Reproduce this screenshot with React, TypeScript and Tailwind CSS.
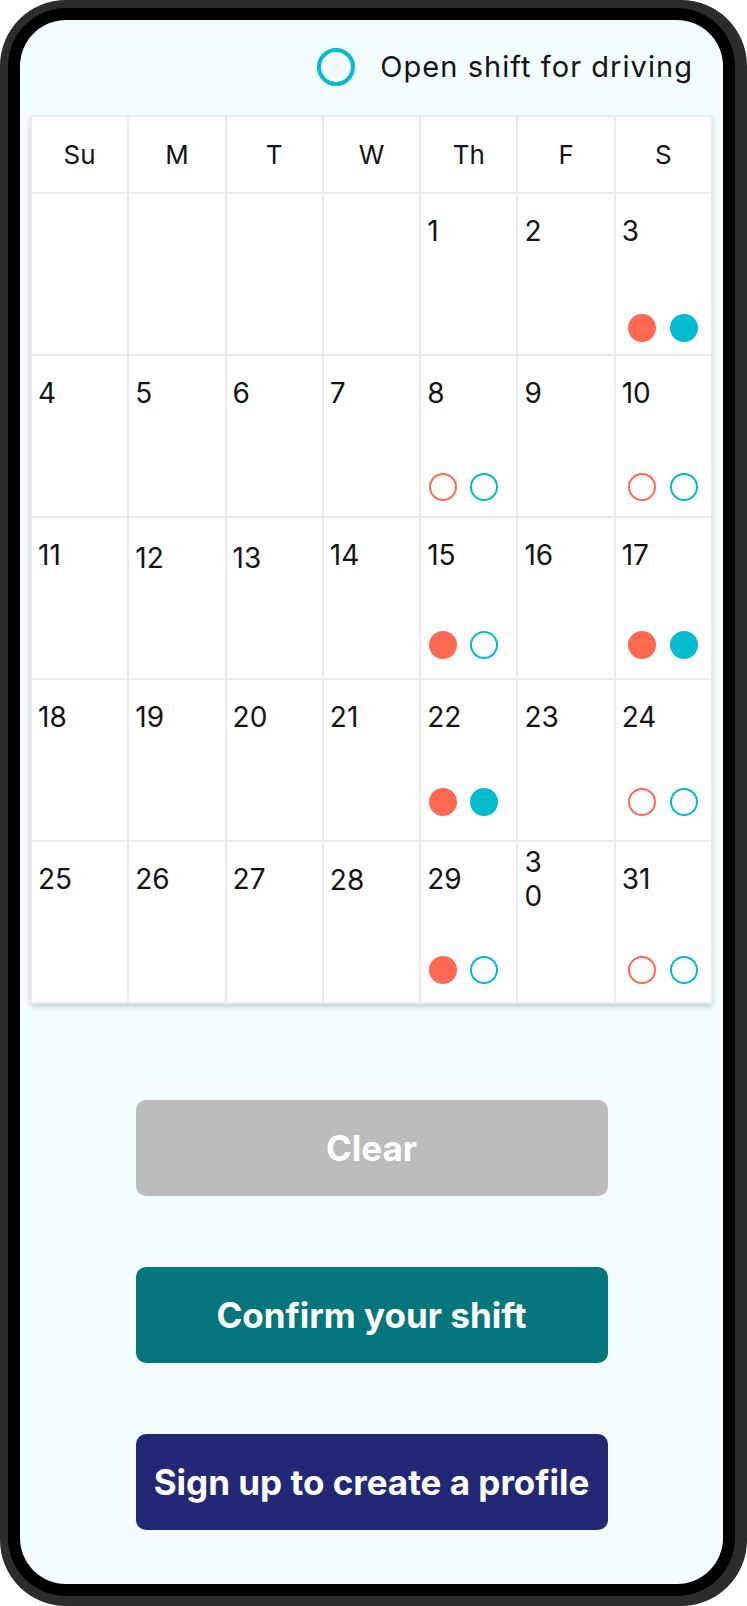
import React from "react";

type Dot = "fill" | "line";
type Cell = { n?: string; red?: Dot; teal?: Dot; dy?: number; wrap?: boolean };

const rows: Cell[][] = [
  [{}, {}, {}, {}, { n: "1" }, { n: "2" }, { n: "3", red: "fill", teal: "fill" }],
  [{ n: "4" }, { n: "5" }, { n: "6" }, { n: "7" }, { n: "8", red: "line", teal: "line" }, { n: "9" }, { n: "10", red: "line", teal: "line" }],
  [{ n: "11" }, { n: "12", dy: 3 }, { n: "13", dy: 3 }, { n: "14" }, { n: "15", red: "fill", teal: "line" }, { n: "16" }, { n: "17", red: "fill", teal: "fill" }],
  [{ n: "18" }, { n: "19" }, { n: "20" }, { n: "21" }, { n: "22", red: "fill", teal: "fill" }, { n: "23" }, { n: "24", red: "line", teal: "line" }],
  [{ n: "25" }, { n: "26" }, { n: "27" }, { n: "28", dy: 1 }, { n: "29", red: "fill", teal: "line" }, { n: "30", wrap: true }, { n: "31", red: "line", teal: "line" }],
];

// bottom spacing of the status circles for each week row
const rowPad = [12, 15, 19, 24, 18];

const heads = ["Su", "M", "T", "W", "Th", "F", "S"];

function Circle({ kind, color }: { kind: Dot; color: "red" | "teal" }) {
  if (color === "red") {
    return kind === "fill" ? (
      <div className="h-[28px] w-[28px] rounded-full bg-[#ff6954]" />
    ) : (
      <div className="h-[28px] w-[28px] rounded-full border-2 border-[#ff6954]" />
    );
  }
  return kind === "fill" ? (
    <div className="h-[28px] w-[28px] rounded-full bg-[#02bccd]" />
  ) : (
    <div className="h-[28px] w-[28px] rounded-full border-2 border-[#02bccd]" />
  );
}

function DayCell({ c, pad, last }: { c: Cell; pad: number; last: boolean }) {
  return (
    <div
      className="flex h-[160px] flex-col bg-white pl-[6px] pt-[20px]"
      style={{ paddingBottom: pad }}
    >
      <div
        className="flex h-[34px] flex-col justify-center text-[28px] leading-[34px] text-[#141414]"
        style={c.dy ? { transform: `translateY(${c.dy}px)` } : undefined}
      >
        {c.wrap ? (
          <>
            <span>3</span>
            <span>0</span>
          </>
        ) : (
          <span>{c.n}</span>
        )}
      </div>
      {c.red && c.teal && (
        <div className={last ? "mt-auto flex gap-[14px] pl-[6px]" : "mt-auto flex gap-[13px] pl-[2px]"}>
          <Circle kind={c.red} color="red" />
          <Circle kind={c.teal} color="teal" />
        </div>
      )}
    </div>
  );
}

export default function App() {
  return (
    <div
      className="h-[1606px] w-[747px] rounded-[66px] bg-[#2c2c2c] pt-[8px] pl-[8px] pr-[12px] pb-[10px]"
      style={{ fontFamily: "Inter, 'Noto Sans', sans-serif" }}
    >
      <div className="h-full w-full rounded-[58px] bg-black p-[12px]">
        <div className="flex h-full w-full flex-col overflow-hidden rounded-[46px] bg-[#f3fdfe]">
          {/* legend */}
          <div className="mt-[27px] flex h-[40px] items-center justify-end gap-[25px] pr-[30px]">
            <div className="h-[38px] w-[38px] rounded-full border-[4px] border-[#02bccd]" />
            <span className="text-[29px] leading-[34px] tracking-[0.036em] text-[#141414]">
              Open shift for driving
            </span>
          </div>

          {/* calendar */}
          <div className="mx-[10px] mt-[28px] overflow-hidden rounded-[4px] shadow-[0_3px_5px_rgba(0,0,0,0.18)]">
            <div className="grid grid-cols-7 gap-[2px] bg-[#eaebee] p-[2px]">
              {heads.map((h) => (
                <div
                  key={h}
                  className="flex h-[75px] items-center justify-center bg-white text-[26px] text-[#141414]"
                >
                  {h}
                </div>
              ))}
              {rows.map((r, ri) =>
                r.map((c, ci) => (
                  <DayCell key={`${ri}-${ci}`} c={c} pad={rowPad[ri]} last={ci === 6} />
                ))
              )}
            </div>
          </div>

          {/* buttons */}
          <div className="mt-[96px] flex flex-col items-center gap-[71px]">
            <button className="flex h-[96px] w-[472px] items-center justify-center rounded-[10px] bg-[#bcbcbc] text-[35px] font-bold text-white">
              Clear
            </button>
            <button className="flex h-[96px] w-[472px] items-center justify-center rounded-[10px] bg-[#04767c] text-[35px] font-bold text-white">
              Confirm your shift
            </button>
            <button className="flex h-[96px] w-[472px] items-center justify-center rounded-[10px] bg-[#222875] text-[35px] font-bold text-white">
              Sign up to create a profile
            </button>
          </div>
        </div>
      </div>
    </div>
  );
}
